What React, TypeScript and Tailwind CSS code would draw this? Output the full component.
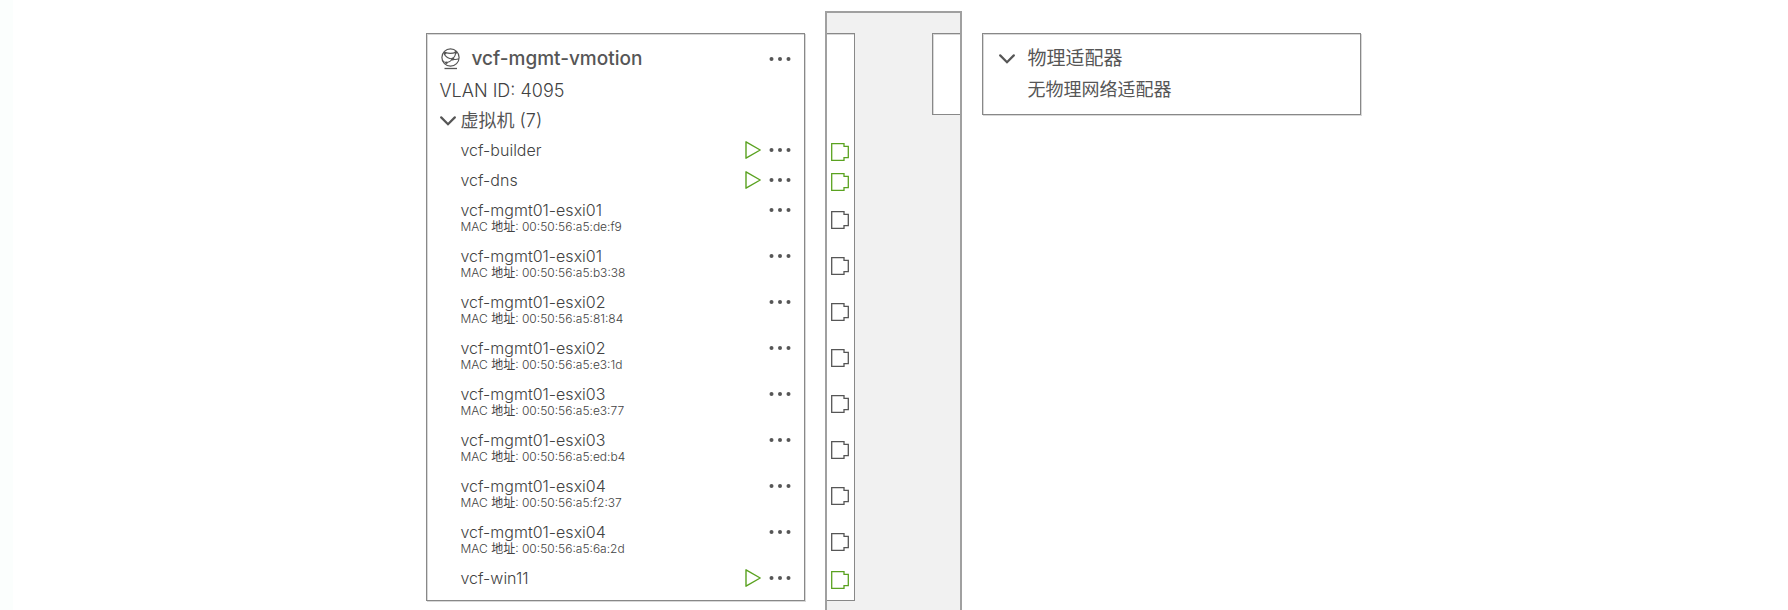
import React from 'react';

type Vm = {
  name: string;
  mac?: string;
  running?: boolean;
};

const vms: Vm[] = [
  { name: 'vcf-builder', running: true },
  { name: 'vcf-dns', running: true },
  { name: 'vcf-mgmt01-esxi01', mac: '00:50:56:a5:de:f9' },
  { name: 'vcf-mgmt01-esxi01', mac: '00:50:56:a5:b3:38' },
  { name: 'vcf-mgmt01-esxi02', mac: '00:50:56:a5:81:84' },
  { name: 'vcf-mgmt01-esxi02', mac: '00:50:56:a5:e3:1d' },
  { name: 'vcf-mgmt01-esxi03', mac: '00:50:56:a5:e3:77' },
  { name: 'vcf-mgmt01-esxi03', mac: '00:50:56:a5:ed:b4' },
  { name: 'vcf-mgmt01-esxi04', mac: '00:50:56:a5:f2:37' },
  { name: 'vcf-mgmt01-esxi04', mac: '00:50:56:a5:6a:2d' },
  { name: 'vcf-win11', running: true },
];

const NetworkIcon = () => (
  <svg viewBox="0 0 20 22" className="w-5 h-[22px] shrink-0" fill="none" stroke="#565656" aria-hidden="true">
    <circle cx="10.5" cy="9.5" r="8.6" strokeWidth="1.2" />
    <path d="M5.6 4.6C9 5.8 12.6 5.6 16 4.2M4.2 6C5.4 8.4 8.8 10.6 12.6 11M16 4.2C15.6 7 14.6 9.4 12.6 11M12.6 11C10.8 13.2 8.8 14.6 6.4 14.8M2.2 12C3.2 13.6 4.6 14.6 6.4 14.8M12.6 11C14.6 11.8 16.8 11.6 18.8 10.8" strokeWidth="1.1" />
    <g fill="#565656" stroke="none">
      <circle cx="5" cy="5.2" r="1.4" />
      <circle cx="15.8" cy="4.4" r="1.4" />
      <circle cx="12.6" cy="11" r="1.5" />
      <circle cx="6.4" cy="14.8" r="1.3" />
    </g>
    <path d="M4.5 20.5H17" strokeWidth="1.3" />
  </svg>
);

const Chevron = () => (
  <svg viewBox="0 0 16 10" className="w-4 h-2.5" fill="none" stroke="#565656" strokeWidth="2.2" aria-hidden="true">
    <path d="M1.2 1.4L8 8.2L14.8 1.4" strokeLinecap="round" />
  </svg>
);

const MoreButton = ({ label }: { label: string }) => (
  <button type="button" aria-label={label} className="flex items-center h-5">
    <svg viewBox="0 0 22 4" className="w-[22px] h-1" fill="#565656" aria-hidden="true">
      <circle cx="2.5" cy="2" r="2" />
      <circle cx="11" cy="2" r="2" />
      <circle cx="19.5" cy="2" r="2" />
    </svg>
  </button>
);

const PlayIcon = () => (
  <svg viewBox="0 0 16 18" className="w-4 h-[18px]" fill="none" stroke="#5aa220" strokeWidth="1.4" aria-hidden="true">
    <path d="M1 0.8V17.2L15.2 9Z" strokeLinejoin="round" />
  </svg>
);

const PortIcon = ({ running }: { running?: boolean }) => (
  <svg
    viewBox="0 0 18 18"
    className={running ? 'w-[18px] h-[18px] text-[#5aa220]' : 'w-[18px] h-[18px] text-[#565656]'}
    fill="none"
    stroke="currentColor"
    strokeWidth="1.3"
    aria-hidden="true"
  >
    <path d="M0.7 0.7H13V3.3H17.3V14.7H13V17.3H0.7Z" />
  </svg>
);

const PortGroup = () => (
  <section className="flex flex-col w-[379px] border border-[#888888] bg-white shadow-[1px_1px_0_#d8d8d8,inset_1px_1px_0_#d8d8d8] px-[13px] pt-[9px] pb-[7px]">
    <header className="flex items-center h-8">
      <NetworkIcon />
      <h2 className="ml-3 text-[19px] font-medium text-[#565656]">vcf-mgmt-vmotion</h2>
      <div className="ml-auto">
        <MoreButton label="vcf-mgmt-vmotion" />
      </div>
    </header>
    <p className="flex items-center h-8 text-lg">VLAN ID: 4095</p>
    <button type="button" className="flex items-center gap-[5px] h-7 text-lg">
      <Chevron />
      <span>
        <span className="font-normal text-[#565656]">虚拟机</span> (7)
      </span>
    </button>
    <ul>
      {vms.map((vm, i) => (
        <li key={i} className={vm.mac ? 'flex h-[46px] pl-[21px]' : 'flex h-[30px] pl-[21px]'}>
          <div>
            <p className="flex items-center h-[30px] text-base">{vm.name}</p>
            {vm.mac && (
              <p className="-mt-1 text-xs leading-3">
                MAC <span className="font-normal">地址</span>: {vm.mac}
              </p>
            )}
          </div>
          <div className="flex items-center gap-2 h-[30px] ml-auto">
            {vm.running && <PlayIcon />}
            <MoreButton label={vm.name} />
          </div>
        </li>
      ))}
    </ul>
  </section>
);

const Switch = () => (
  <div className="flex justify-between items-start w-[137px] border-2 border-b-0 border-[#a0a0a0] bg-[#f1f1f1] pt-5">
    <ul className="w-7 border border-l-0 border-[#888888] bg-white shadow-[inset_0_1px_0_#d8d8d8] pt-[103px] pb-[5px]">
      {vms.map((vm, i) => (
        <li key={i} className={vm.mac ? 'flex items-center pl-1 h-[46px]' : 'flex items-center pl-1 h-[30px]'}>
          <PortIcon running={vm.running} />
        </li>
      ))}
    </ul>
    <div className="w-7 h-[82px] border border-r-0 border-[#888888] bg-white shadow-[inset_1px_1px_0_#d8d8d8]" />
  </div>
);

const PhysicalAdapters = () => (
  <section className="w-[379px] h-[82px] border border-[#888888] bg-white text-[#565656] font-normal shadow-[1px_1px_0_#d8d8d8,inset_1px_1px_0_#d8d8d8] pl-4 pt-2.5">
    <button type="button" className="flex items-center gap-[13px] h-[30px] text-[19px]">
      <Chevron />
      物理适配器
    </button>
    <p className="flex items-center h-8 pl-[29px] text-lg">无物理网络适配器</p>
  </section>
);

export default function App() {
  return (
    <main className="grid grid-cols-[13px_1fr_15px] h-screen overflow-hidden bg-white text-[#424242] font-light font-['Inter','Noto_Sans_CJK_SC',sans-serif]">
      <div className="bg-[#fbfefd]" />
      <div className="flex justify-center gap-5 pt-[11px]">
        <div className="pt-[22px]">
          <PortGroup />
        </div>
        <Switch />
        <div className="pt-[22px]">
          <PhysicalAdapters />
        </div>
      </div>
    </main>
  );
}
